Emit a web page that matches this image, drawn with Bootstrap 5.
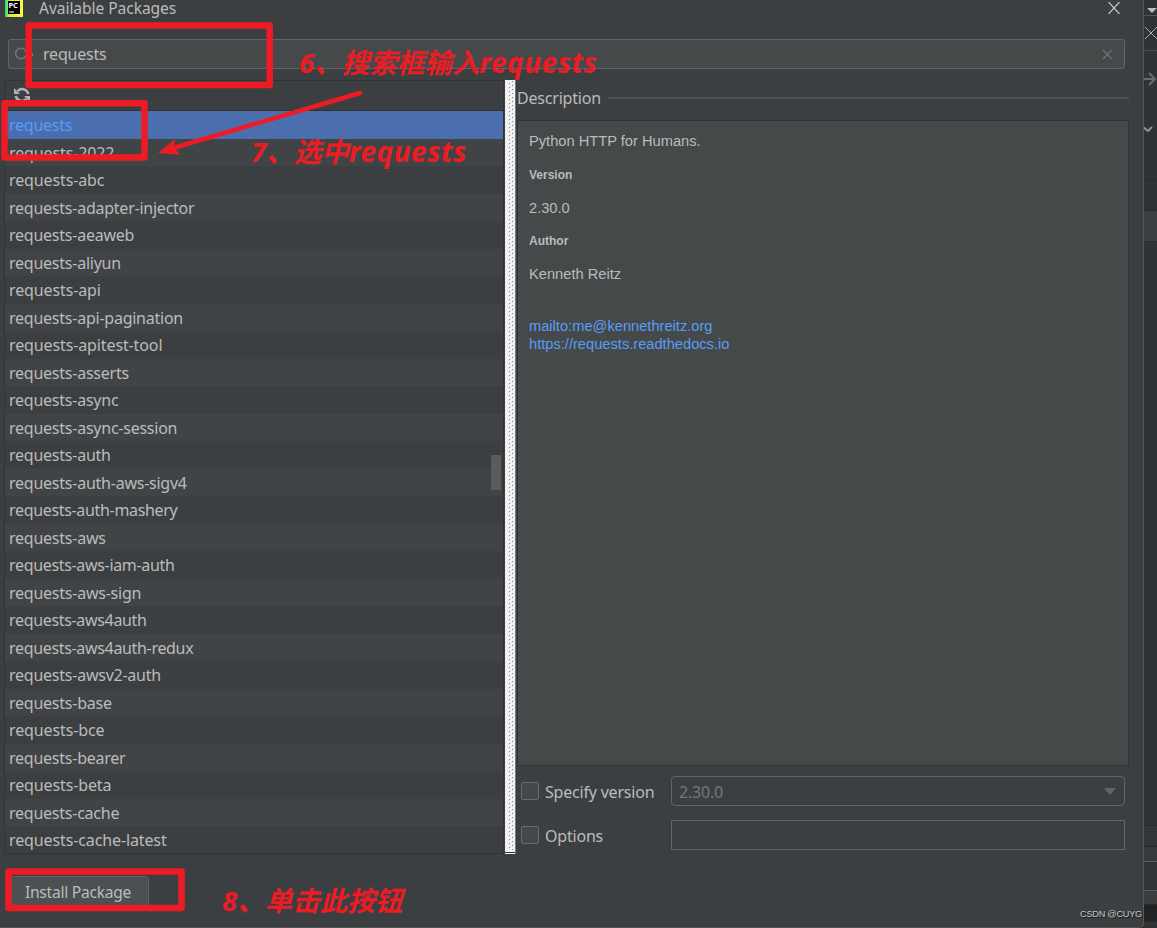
<!DOCTYPE html>
<html lang="zh-CN">
<head>
<meta charset="utf-8">
<meta name="viewport" content="width=device-width, initial-scale=1">
<title>Available Packages</title>
<link href="https://cdn.jsdelivr.net/npm/bootstrap@5.3.0/dist/css/bootstrap.min.css" rel="stylesheet">
<style>
body{width:1157px;height:928px;overflow:hidden;background:#303335;color:#bbb;font:16px/20px "Noto Sans","Noto Sans CJK SC",sans-serif;letter-spacing:-.2px}
svg{display:block;flex:none}
.dialog{width:1144px;height:928px;background:#3c3f41;border-right:1px solid #555759;border-bottom:1px solid #505254;border-bottom-right-radius:5px}
.titlebar{height:39px;padding:0 22px 0 5px}
.titlebar span{margin:0 0 0 16px;line-height:17px;font-size:15.6px;letter-spacing:-.07px}
.closer{margin-top:2px}
.searchbox{height:30px;width:1117px;margin-left:8px;border:1px solid #646464;border-radius:3px;background:#45494a;padding:0 11px 0 6px}
.searchbox span{margin:-1px 0 0 10px;flex:1}
.panes{height:774px;margin-top:11px}
.listpane{width:500px;margin-left:4px;border:1px solid #323334}
.tools{height:30px;border-bottom:1px solid #323232;padding:6px 0 0 8px}
.pkgs{height:742px;overflow:hidden;border-radius:0}
.pkgs .list-group-item{height:27.5px;line-height:27.5px;padding:1px 0 0 4px;border:0;border-radius:0;background:#3c3f41;color:#bbb;letter-spacing:-.24px}
.pkgs .list-group-item:nth-child(even){background:#414446}
.pkgs .list-group-item.active{background:#4b6eaf;color:#589df6;z-index:0}
.pkgs .snug{letter-spacing:-.33px}
.pkgs .loose{letter-spacing:-.12px}
.thumb{position:absolute;right:2px;top:374px;width:10px;height:35px;background:#595b5c}
.splitter{width:11px;margin-left:1px;background:#f0f0f0;border-right:1px solid #6d7a89}
.detail{width:612px;margin-left:1px}
.heading{height:40px;padding-bottom:3px}
.heading span{margin-top:-1px}
.heading i{height:2px;background:#515151;margin:-1px 0 0 7px;flex:1}
.describe{height:646px;background:#45494a;border:1px solid #323232;padding:11px 11px;font:14.67px/18px "Liberation Sans",sans-serif;letter-spacing:0}
.describe p{margin:0 0 15px;height:18px}
.describe p + p{position:relative;top:1px}
.describe .cap{font-size:12px;font-weight:bold}
.describe a{color:#589df6;text-decoration:none;display:block}
.links{padding-top:20px}
.optrow{height:30px;padding-left:4px}
.check{width:18px;height:18px;border:1px solid #6b6b6b;border-radius:2px;background:#43494a}
.optrow label{width:126px;margin:1px 0 0 6px}
.field{width:454px;height:30px;border:1px solid #646464;padding:0 8px 0 7px;color:#777}
.field span{margin-top:1px}
.install{height:32px;width:141px;margin:22px 0 0 8px;border:1px solid #5e6060;border-radius:4px;background:#4c5052;color:#bbb;padding:0 1px 0 0;font-size:15.6px;line-height:30px;letter-spacing:-.25px}
.behind{width:13px}
.behind div{border-bottom:1px solid #282a2b}
.marks{position:absolute;left:0;top:0;z-index:5}
.note{position:absolute;z-index:5;color:#ed1c24;font-size:27.5px;line-height:36px;font-weight:700;font-style:italic;white-space:nowrap;letter-spacing:0}
.note b{font-size:28px;font-weight:700;letter-spacing:.5px}
.water{position:absolute;left:1080px;top:906px;font:9.2px/16px "Liberation Sans",sans-serif;letter-spacing:-.25px;color:#c8c8c8;text-shadow:1px 1px 1px #111;white-space:nowrap}
</style>
</head>
<body class="position-relative d-flex">
<main class="dialog">
 <header class="titlebar d-flex align-items-start">
  <svg width="18" height="17" viewBox="0 0 18 17"><defs><linearGradient id="g"><stop stop-color="#21d789"/><stop offset=".25" stop-color="#d6ef3a"/><stop offset="1" stop-color="#fcf84a"/></linearGradient></defs><path fill="url(#g)" d="M0 0h18v17H0z"/><path d="M3 1h12v13H3z"/><path stroke="#fff" d="M4 12h5"/><text x="3.6" y="8" font-size="7.5" font-weight="700" fill="#fff">PC</text></svg>
  <span>Available Packages</span>
  <svg class="closer ms-auto" width="14" height="12" viewBox="0 0 14 12"><path d="m1.500 0 11 12m0-12-11 12" stroke="#c4c4c4" stroke-width="1.2"/></svg>
 </header>
 <div class="searchbox d-flex align-items-center">
  <svg width="18" height="16"><circle cx="6" cy="7.5" r="5.4" fill="none" stroke="#777b7d" stroke-width="1.3"/><path d="m10 11 2 2" stroke="#777b7d"/><path d="M14 7h6l-3 4" fill="#777b7d"/></svg>
  <span>requests</span>
  <svg width="11" height="11"><path d="m1 1 9 9m0-9-9 9" stroke="#6e7376" stroke-width="1.2"/></svg>
 </div>
 <div class="panes d-flex">
  <section class="listpane position-relative">
   <div class="tools"><svg width="18" height="16" viewBox="0 0 18 16" fill="none" stroke="#afb1b3" stroke-width="2.4"><path d="M4.500 4C8 .8 13.500 1.500 15.500 7M13.500 12C10 15.200 4.500 14.500 2.500 9"/><path d="M1 1v6h6ZM17 15V9h-6Z" fill="#afb1b3" stroke="none"/></svg></div>
   <ul class="pkgs list-group list-group-flush">
    <li class="list-group-item active">requests</li>
    <li class="list-group-item loose">requests-2022</li>
    <li class="list-group-item loose">requests-abc</li>
    <li class="list-group-item">requests-adapter-injector</li>
    <li class="list-group-item">requests-aeaweb</li>
    <li class="list-group-item">requests-aliyun</li>
    <li class="list-group-item loose">requests-api</li>
    <li class="list-group-item">requests-api-pagination</li>
    <li class="list-group-item loose">requests-apitest-tool</li>
    <li class="list-group-item">requests-asserts</li>
    <li class="list-group-item">requests-async</li>
    <li class="list-group-item">requests-async-session</li>
    <li class="list-group-item">requests-auth</li>
    <li class="list-group-item">requests-auth-aws-sigv4</li>
    <li class="list-group-item snug">requests-auth-mashery</li>
    <li class="list-group-item">requests-aws</li>
    <li class="list-group-item snug">requests-aws-iam-auth</li>
    <li class="list-group-item">requests-aws-sign</li>
    <li class="list-group-item snug">requests-aws4auth</li>
    <li class="list-group-item snug">requests-aws4auth-redux</li>
    <li class="list-group-item">requests-awsv2-auth</li>
    <li class="list-group-item">requests-base</li>
    <li class="list-group-item loose">requests-bce</li>
    <li class="list-group-item">requests-bearer</li>
    <li class="list-group-item loose">requests-beta</li>
    <li class="list-group-item">requests-cache</li>
    <li class="list-group-item loose">requests-cache-latest</li>
   </ul>
   <div class="thumb"></div>
  </section>
  <div class="splitter"><svg width="10" height="774" shape-rendering="crispEdges"><defs><pattern id="dots" x="3" width="6" height="4" patternUnits="userSpaceOnUse"><path fill="#7b8088" d="M1 3h1v1H1zM4 1h1v1H4z"/><path fill="#fff" d="M0 2h1v1H0zM3 0h1v1H3z"/></pattern></defs><path fill="url(#dots)" d="M3 0h6v771H3z"/><path fill="#333" d="M0 772h10v1H0z"/></svg></div>
  <section class="detail">
   <div class="heading d-flex align-items-center"><span>Description</span><i></i></div>
   <div class="describe">
    <p>Python HTTP for Humans.</p><p class="cap">Version</p><p>2.30.0</p><p class="cap">Author</p><p>Kenneth Reitz</p>
    <div class="links"><a href="#">mailto:me@kennethreitz.org</a><a href="#">https://requests.readthedocs.io</a></div>
   </div>
   <div class="optrow d-flex align-items-center" style="margin-top:10px"><span class="check"></span><label>Specify version</label><div class="field rounded-1 d-flex align-items-center justify-content-between"><span>2.30.0</span><svg width="12" height="7"><path fill="#646464" d="M0 0h12L6 7z"/></svg></div></div>
   <div class="optrow d-flex align-items-center" style="margin-top:14px"><span class="check"></span><label>Options</label><div class="field"></div></div>
  </section>
 </div>
 <button class="install btn">Install Package</button>
</main>
<aside class="behind">
 <div style="height:16px;border-color:#555"><svg width="13" height="15"><path fill="#bbb" d="M3 8h10l-5 5z"/></svg></div>
 <div style="height:35px;border-color:#4a4c4e"><svg width="13" height="34"><path d="m1 11 12 12m0-12L1 23" stroke="#aaa"/></svg></div>
 <div style="height:129px"><svg width="13" height="128" fill="none" stroke="#6b6b6b" stroke-width="2"><path d="M0 28h11m-6-6 6 6-6 6"/><path d="m-1 76 5 4 4-4" stroke="#8b979e"/></svg></div>
 <div style="height:31px"></div><div style="height:31px;background:#3c3f41"></div><div style="height:584px"></div><div style="height:21px;background:#333638"></div><div style="height:15px;border-color:#5a5c5d;background:#37393b"></div><div style="height:29px;border-color:#5a5c5d;background:#323537"></div><div style="height:14px;background:#3a3c3e"></div><div style="height:17px;background:#202224"></div>
</aside>
<svg class="marks" width="1157" height="928" fill="none" stroke="#ed1c24" stroke-width="6.500" stroke-linejoin="round"><path d="M28.700 25.500H269.700V85H28.700ZM4.500 103.300H144.500V157.500H4.500ZM8.500 871.500H181.500V908H8.500Z"/><path d="M360 93 175 147.500" stroke-width="4.500" stroke-linecap="round"/><path d="m158 153 17-14-1 8 6 8Z" fill="#ed1c24" stroke="none"/></svg>
<div class="note" style="left:299px;top:44px">6、搜索框输入<b>requests</b></div>
<div class="note" style="left:251px;top:133px">7、选中<b>requests</b></div>
<div class="note" style="left:222px;top:883px">8、单击此按钮</div>
<div class="water">CSDN @CUYG</div>
<script src="https://cdn.jsdelivr.net/npm/bootstrap@5.3.0/dist/js/bootstrap.bundle.min.js"></script>
</body>
</html>
